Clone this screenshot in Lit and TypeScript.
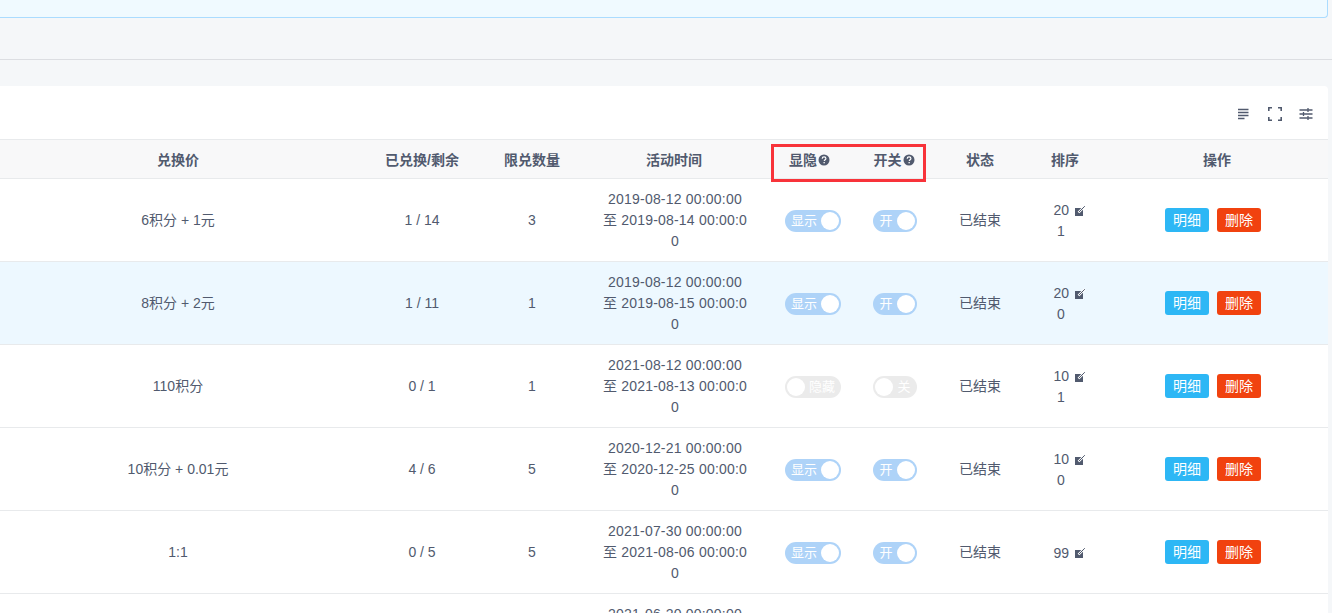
import { LitElement, html, css } from "lit";
import { customElement } from "lit/decorators.js";

const rows = [
  { price: "6积分 + 1元", ex: "1 / 14", lim: "3", a: "2019-08-12 00:00:00", b: "至 2019-08-14 00:00:00", on: true, s1: "20", s2: "1" },
  { price: "8积分 + 2元", ex: "1 / 11", lim: "1", a: "2019-08-12 00:00:00", b: "至 2019-08-15 00:00:00", on: true, s1: "20", s2: "0", hl: true },
  { price: "110积分", ex: "0 / 1", lim: "1", a: "2021-08-12 00:00:00", b: "至 2021-08-13 00:00:00", on: false, s1: "10", s2: "1" },
  { price: "10积分 + 0.01元", ex: "4 / 6", lim: "5", a: "2020-12-21 00:00:00", b: "至 2020-12-25 00:00:00", on: true, s1: "10", s2: "0" },
  { price: "1:1", ex: "0 / 5", lim: "5", a: "2021-07-30 00:00:00", b: "至 2021-08-06 00:00:00", on: true, s1: "99", s2: "" },
];

@customElement("app-root")
export class AppRoot extends LitElement {
  static styles = css`
    :host { display: block; height: 613px; overflow: hidden; background: #f5f7f9; position: relative;
      font-family: "Liberation Sans", "Noto Sans CJK SC", sans-serif; font-size: 14px; color: #515a6e; }
    .banner { height: 17px; background: #f0faff; border: 1px solid #abdcff; border-top: 0; border-left: 0; border-radius: 0 0 4px 0; margin-right: 4px; }
    .divider { height: 41px; border-bottom: 1px solid #dcdee2; }
    .card { margin-top: 26px; margin-right: 4px; background: #fff; border-radius: 0 4px 0 0; }
    .tools { height: 53px; display: flex; justify-content: flex-end; align-items: center; gap: 13px; padding: 2px 13px 0 0; box-sizing: border-box; }
    .tools svg { width: 18px; height: 18px; display: block; }
    table { width: 100%; border-collapse: collapse; table-layout: fixed; }
    th { height: 36px; padding: 2px 0 0; background: #f8f8f9; font-weight: 700; text-align: center; line-height: 20px;
      border-top: 1px solid #e8eaec; border-bottom: 1px solid #e8eaec; }
    td { height: 82px; padding: 0; text-align: center; line-height: 20px; border-bottom: 1px solid #e8eaec; }
    tr.hl td { background: #edf8ff; }
    .time { padding: 0 23px 0 25px; line-height: 21px; word-break: break-all; letter-spacing: 0.2px; }
    td.peek { vertical-align: top; border-bottom: 0; padding-top: 10px; }
    .head-wrap { display: inline-flex; align-items: center; gap: 1px; }
    .head-wrap.shift { margin-right: 7px; }
    .head-wrap.nudge { margin-right: 2px; }
    .help { width: 12px; height: 12px; display: block; }
    .box { position: absolute; left: 771px; top: 144px; width: 155px; height: 38px; border: 3px solid #f8333a; box-sizing: border-box; pointer-events: none; }
    .sw { display: inline-flex; align-items: center; box-sizing: border-box; height: 22px; border-radius: 11px; background: #aed3f8; color: #fff; padding: 2px; font-size: 13px; vertical-align: middle; margin-top: 2px; }
    .sw.w { width: 56px; } .sw.n { width: 44px; }
    .sw i { width: 18px; height: 18px; border-radius: 50%; background: #fff; flex: none; }
    .sw span { flex: 1; text-align: center; white-space: nowrap; line-height: 18px; margin-bottom: 1px; }
    .sw.off { background: #ebebeb; flex-direction: row-reverse; }
    .sort { display: inline-block; width: 33px; line-height: 21px; margin-left: 10px; padding-top: 2px; text-align: left; }
    .sort-top { display: flex; align-items: center; gap: 5px; }
    .sort-sub { width: 15px; text-align: center; }
    .sort svg { width: 12px; height: 12px; display: block; flex: none; }
    .ops { display: flex; justify-content: center; gap: 8px; padding-right: 8px; }
    .btn { width: 44px; height: 24px; border-radius: 3px; color: #fff; font-size: 14px; line-height: 24px; text-align: center; }
    .blue { background: #2db7f5; } .red { background: #f1420f; }
  `;

  help() {
    return html`<svg class="help" viewBox="0 0 12 12"><circle cx="6" cy="6" r="5.5" fill="#515a6e"/><path d="M4.2 4.7c0-1.1.8-1.8 1.9-1.8s1.8.7 1.8 1.6c0 1.3-1.6 1.3-1.6 2.6" fill="none" stroke="#fff" stroke-width="1.2"/><rect x="5.5" y="8" width="1.3" height="1.3" fill="#fff"/></svg>`;
  }

  edit() {
    return html`<svg viewBox="0 0 12 12"><rect x="1" y="3" width="8" height="8" fill="#515a6e"/><path d="M4.5 7.5 11 1" stroke="#fff" stroke-width="2.4"/><path d="M5 7 10.8 1.2" stroke="#515a6e" stroke-width="1"/></svg>`;
  }

  sw(on: boolean, wide: boolean) {
    const label = wide ? (on ? "显示" : "隐藏") : on ? "开" : "关";
    return html`<div class="sw ${wide ? "w" : "n"} ${on ? "" : "off"}"><span>${label}</span><i></i></div>`;
  }

  render() {
    const stroke = "#515a6e";
    return html`
      <div class="banner"></div>
      <div class="divider"></div>
      <div class="card">
        <div class="tools">
          <svg viewBox="0 0 18 18" fill="none" stroke=${stroke} stroke-width="1.3">
            <path d="M3 4.5h10.5M3 7.5h10.5M3 10.5h10.5M3 13.5h6.5"/>
          </svg>
          <svg viewBox="0 0 18 18" fill="none" stroke=${stroke} stroke-width="1.6">
            <path d="M6 2.8H2.8V6M12 2.8h3.2V6M2.8 12v3.2H6M15.2 12v3.2H12"/>
          </svg>
          <svg viewBox="0 0 18 18" fill="none" stroke=${stroke} stroke-width="1.3">
            <path d="M2.5 5h13M2.5 9h13M2.5 13h13M11 3v4M6.5 7v4M11 11v4"/>
          </svg>
        </div>
        <table>
          <colgroup>
            <col style="width:356px"/><col style="width:132px"/><col style="width:88px"/><col style="width:196px"/>
            <col style="width:82px"/><col style="width:82px"/><col style="width:88px"/><col style="width:82px"/><col/>
          </colgroup>
          <thead><tr>
            <th>兑换价</th><th>已兑换/剩余</th><th>限兑数量</th><th>活动时间</th>
            <th><span class="head-wrap shift">显隐${this.help()}</span></th>
            <th><span class="head-wrap nudge">开关${this.help()}</span></th>
            <th>状态</th><th>排序</th><th>操作</th>
          </tr></thead>
          <tbody>
            ${rows.map((r) => html`<tr class=${r.hl ? "hl" : ""}>
              <td>${r.price}</td><td>${r.ex}</td><td>${r.lim}</td>
              <td><div class="time">${r.a}<br/>${r.b}</div></td>
              <td>${this.sw(r.on, true)}</td><td>${this.sw(r.on, false)}</td>
              <td>已结束</td>
              <td><div class="sort"><div class="sort-top">${r.s1}${this.edit()}</div>${r.s2 ? html`<div class="sort-sub">${r.s2}</div>` : ""}</div></td>
              <td><div class="ops"><div class="btn blue">明细</div><div class="btn red">删除</div></div></td>
            </tr>`)}
            <tr><td class="peek" colspan="3"></td><td class="peek"><div class="time">2021-06-20 00:00:00</div></td><td class="peek" colspan="5"></td></tr>
          </tbody>
        </table>
      </div>
      <div class="box"></div>
    `;
  }
}
